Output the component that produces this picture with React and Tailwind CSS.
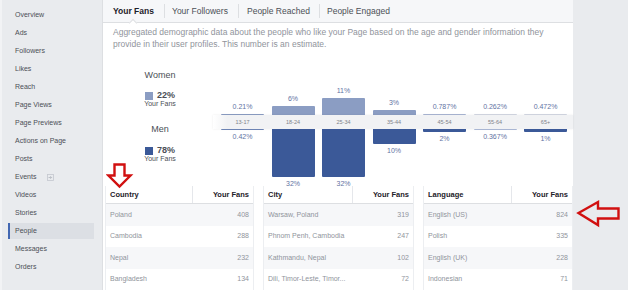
import React from "react";

const navItems = [
  "Overview",
  "Ads",
  "Followers",
  "Likes",
  "Reach",
  "Page Views",
  "Page Previews",
  "Actions on Page",
  "Posts",
  "Events",
  "Videos",
  "Stories",
  "People",
  "Messages",
  "Orders",
];

const ages = [
  { label: "13-17", women: "0.21%", men: "0.42%", wh: 1, mh: 1, wc: "#8b9dc3", mc: "#6d84b4" },
  { label: "18-24", women: "6%", men: "32%", wh: 9, mh: 48, wc: "#8b9dc3", mc: "#3b5998" },
  { label: "25-34", women: "11%", men: "32%", wh: 17, mh: 48, wc: "#8b9dc3", mc: "#3b5998" },
  { label: "35-44", women: "3%", men: "10%", wh: 5, mh: 15, wc: "#8b9dc3", mc: "#3b5998" },
  { label: "45-54", women: "0.787%", men: "2%", wh: 1, mh: 3, wc: "#a9b6d3", mc: "#3b5998" },
  { label: "55-64", women: "0.262%", men: "0.367%", wh: 1, mh: 1, wc: "#d3d8e3", mc: "#a9b6d3" },
  { label: "65+", women: "0.472%", men: "1%", wh: 1, mh: 3, wc: "#d3d8e3", mc: "#3b5998" },
];

const tables = [
  {
    width: "w-[149px]",
    col: "w-[87px]",
    head: "Country",
    rows: [
      ["Poland", 408],
      ["Cambodia", 288],
      ["Nepal", 232],
      ["Bangladesh", 134],
    ],
  },
  {
    width: "w-[151px]",
    col: "w-[89px]",
    head: "City",
    rows: [
      ["Warsaw, Poland", 319],
      ["Phnom Penh, Cambodia", 247],
      ["Kathmandu, Nepal", 102],
      ["Dili, Timor-Leste, Timor...", 72],
    ],
  },
  {
    width: "w-[150px]",
    col: "w-[88px]",
    head: "Language",
    rows: [
      ["English (US)", 824],
      ["Polish", 335],
      ["English (UK)", 228],
      ["Indonesian", 71],
    ],
  },
];

const Sidebar = () => (
  <div className="w-[102px] shrink-0 pt-[6px] border-l-2 border-[#f2f3f5]">
    {navItems.map((item) => {
      const active = item === "People";
      return (
        <div
          key={item}
          className={`h-[18px] flex items-center ml-[6px] mr-[3px] text-[7px] text-[#4b4f56] ${
            active ? "pl-[5px]" : "pl-[7px]"
          }`}
        >
          {active ? (
            <div className="flex items-center h-[16px] w-full -ml-[5px] pl-[5px] bg-[#dcdfe4] border-l-2 border-[#4267b2]">
              {item}
            </div>
          ) : (
            <>
              {item}
              {item === "Events" && (
                <svg width="7" height="7" viewBox="0 0 7 7" className="ml-[11px]">
                  <rect x="0.5" y="0.5" width="6" height="6" fill="none" stroke="#c4c8cf" strokeWidth="0.8" />
                  <path d="M1.5 3.5h3M3.3 2.2l1.3 1.3-1.3 1.3" fill="none" stroke="#b0b5bd" strokeWidth="0.8" />
                </svg>
              )}
            </>
          )}
        </div>
      );
    })}
  </div>
);

const Tabs = () => {
  const tabs = [
    { t: "Your Fans", w: "w-[61px] pl-[10px]", active: true },
    { t: "Your Followers", w: "w-[73px] pl-[7px]" },
    { t: "People Reached", w: "w-[80px] pl-[8px]" },
    { t: "People Engaged", w: "pl-[7px]" },
  ];
  return (
    <div className="relative h-[24px] bg-[#f6f7f9] border-b border-[#dddfe2] flex items-center">
      {tabs.map((tab, i) => (
        <React.Fragment key={tab.t}>
          {i > 0 && <div className="w-px h-[14px] bg-[#dddfe2]" />}
          <div
            className={`${tab.w} text-[8.5px] ${
              tab.active ? "font-bold text-[#1d2129]" : "text-[#4b4f56]"
            }`}
          >
            {tab.t}
          </div>
        </React.Fragment>
      ))}
      <div className="absolute left-[27px] bottom-[-4px] w-[6px] h-[6px] bg-white border-l border-t border-[#dddfe2] rotate-45" />
    </div>
  );
};

const Legend = () => (
  <div className="ml-[38px] w-[38px] shrink-0 flex flex-col items-center pt-[19px]">
    <div className="text-[9px] leading-[12px] text-[#4b4f56]">Women</div>
    <div className="mt-[10px] h-[9px] flex items-center">
      <div className="w-[8px] h-[8px] bg-[#8b9dc3]" />
      <span className="ml-[4px] text-[9px] font-bold text-[#4b4f56]">22%</span>
    </div>
    <div className="text-[7px] leading-[8px] text-[#4b4f56]">Your Fans</div>
    <div className="mt-[15px] text-[9px] leading-[12px] text-[#4b4f56]">Men</div>
    <div className="mt-[11px] h-[9px] flex items-center">
      <div className="w-[8px] h-[8px] bg-[#3b5998]" />
      <span className="ml-[4px] text-[9px] font-bold text-[#4b4f56]">78%</span>
    </div>
    <div className="text-[7px] leading-[8px] text-[#4b4f56]">Your Fans</div>
  </div>
);

const Chart = () => (
  <div className="ml-[34px] flex-1 flex flex-col">
    <div className="h-[65px] flex items-end gap-[7.5px] pl-[8px]">
      {ages.map((a) => (
        <div key={a.label} className="w-[43px] flex flex-col items-center">
          <div className="text-[7px] leading-[8px] text-[#5f73a3] mb-[3px]">{a.women}</div>
          <div className="w-full rounded-t-[1px]" style={{ height: a.wh, background: a.wc }} />
        </div>
      ))}
    </div>
    <div className="h-[14px] flex items-center gap-[7.5px] pl-[8px] bg-[linear-gradient(to_right,#ffffff,#f1f2f4_4%,#f1f2f4)] shadow-[0_0_2px_rgba(0,0,0,0.08)]">
      {ages.map((a) => (
        <div key={a.label} className="w-[43px] text-center text-[5.5px] text-[#7f838a]">
          {a.label}
        </div>
      ))}
    </div>
    <div className="h-[57px] flex items-start gap-[7.5px] pl-[8px]">
      {ages.map((a) => (
        <div key={a.label} className="w-[43px] flex flex-col items-center">
          <div className="w-full rounded-b-[1px]" style={{ height: a.mh, background: a.mc }} />
          <div className="text-[7px] leading-[8px] text-[#5f73a3] mt-[3px]">{a.men}</div>
        </div>
      ))}
    </div>
  </div>
);

const Table = ({ width, col, head, rows }) => (
  <div className={`${width} border-x border-[#eceef1]`}>
    <div className="h-[18px] flex items-stretch border-b border-[#dddfe2] text-[7.5px] font-bold text-[#1d2129]">
      <div className={`${col} border-r border-[#e5e7eb] flex items-center pl-[4px]`}>{head}</div>
      <div className="flex-1 flex items-center justify-end pr-[4px]">Your Fans</div>
    </div>
    {rows.map(([name, n], i) => (
      <div
        key={name}
        className={`h-[21.5px] flex items-center justify-between px-[4px] text-[7px] text-[#90949c] ${
          i % 2 === 0 ? "bg-[#f6f7f9]" : "bg-white"
        }`}
      >
        <span>{name}</span>
        <span>{n}</span>
      </div>
    ))}
  </div>
);

export default function App() {
  return (
    <div className="relative w-[628px] h-[290px] overflow-hidden flex bg-[#e9ebee] font-['Liberation_Sans',Arial,sans-serif]">
      <Sidebar />
      <div className="w-[471px] shrink-0 bg-white border-l border-[#dddfe2] flex flex-col">
        <Tabs />
        <p className="mt-[3px] pl-[10px] pr-[20px] text-[8.5px] leading-[12px] text-[#90949c]">
          Aggregated demographic data about the people who like your Page based on the age and gender information they
          provide in their user profiles. This number is an estimate.
        </p>
        <div className="h-[136px] flex">
          <Legend />
          <Chart />
        </div>
        <div className="flex gap-[9px] pl-[2px]">
          {tables.map((t) => (
            <Table key={t.head} {...t} />
          ))}
        </div>
      </div>

      {/* annotation arrows */}
      <svg className="absolute left-[106px] top-[161px]" width="30" height="30" viewBox="0 0 30 30">
        <path d="M8.5 3.5h10v11h6l-11 11-11-11h6z" fill="none" stroke="#d11010" strokeWidth="2.4" strokeLinejoin="miter" />
      </svg>
      <svg className="absolute left-[574px] top-[198px]" width="50" height="32" viewBox="0 0 50 32">
        <path d="M4.5 15l19.5-11v6.5h20.5v10h-20.5v6.5z" fill="none" stroke="#d11010" strokeWidth="2.4" strokeLinejoin="miter" />
      </svg>
    </div>
  );
}
